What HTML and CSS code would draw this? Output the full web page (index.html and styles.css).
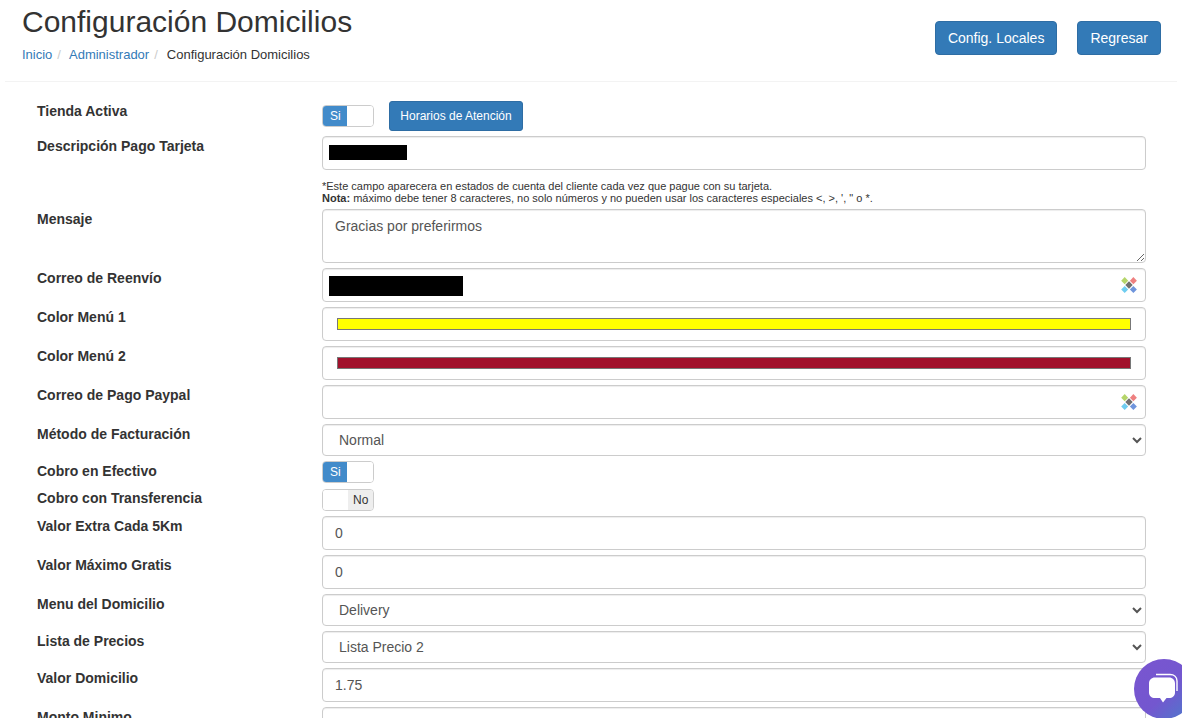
FILE: index.html
```html
<!DOCTYPE html>
<html lang="es">
<head>
<meta charset="utf-8">
<title>Configuración Domicilios</title>
<link rel="stylesheet" href="styles.css">
</head>
<body>
<header class="page-head">
  <div class="head-text">
    <h1 class="title">Configuración Domicilios</h1>
    <ol class="crumbs">
      <li><a href="#">Inicio</a></li>
      <li><a href="#">Administrador</a></li>
      <li class="current">Configuración Domicilios</li>
    </ol>
  </div>
  <div class="head-actions">
    <button class="btn" type="button">Config. Locales</button>
    <button class="btn" type="button">Regresar</button>
  </div>
</header>

<svg class="defs" width="0" height="0" aria-hidden="true">
  <symbol id="picker" viewBox="0 0 16 16">
    <path fill="#b5d56a" d="M3.700 0 7.200 3.700 3.700 7.200 .2 3.700Z"/>
    <path fill="#ee8080" d="M12.400 0 15.900 3.700 12.400 7.200 8.900 3.700Z"/>
    <path fill="#6fcdf0" d="M3.700 8.900 7.200 12.400 3.700 15.900 .2 12.400Z"/>
    <path fill="#6f95dc" d="M12.400 8.900 15.900 12.400 12.400 15.900 8.900 12.400Z"/>
    <path fill="#6f6f6f" d="M8 4.300 11.700 8 8 11.700 4.300 8Z"/>
  </symbol>
</svg>

<form class="form">
  <div class="row">
    <label class="lbl">Tienda Activa</label>
    <div class="ctl ctl-inline">
      <span class="toggle"><span class="on">Si</span><span class="blank"></span></span>
      <button class="btn btn-sm" type="button">Horarios de Atención</button>
    </div>
  </div>
  <div class="row">
    <label class="lbl">Descripción Pago Tarjeta</label>
    <div class="ctl">
      <div class="field"><input class="input" type="text"><span class="mask mask-desc"></span></div>
      <p class="note">*Este campo aparecera en estados de cuenta del cliente cada vez que pague con su tarjeta.<br><b>Nota:</b> máximo debe tener 8 caracteres, no solo números y no pueden usar los caracteres especiales &lt;, &gt;, ', " o *.</p>
    </div>
  </div>
  <div class="row">
    <label class="lbl">Mensaje</label>
    <div class="ctl"><textarea class="input area">Gracias por preferirmos</textarea></div>
  </div>
  <div class="row">
    <label class="lbl">Correo de Reenvío</label>
    <div class="ctl">
      <div class="field"><input class="input" type="text"><span class="mask mask-mail"></span><svg class="pick"><use href="#picker"/></svg></div>
    </div>
  </div>
  <div class="row">
    <label class="lbl">Color Menú 1</label>
    <div class="ctl"><input class="input" type="color" value="#ffff00"></div>
  </div>
  <div class="row">
    <label class="lbl">Color Menú 2</label>
    <div class="ctl"><input class="input" type="color" value="#a1112c"></div>
  </div>
  <div class="row">
    <label class="lbl">Correo de Pago Paypal</label>
    <div class="ctl">
      <div class="field"><input class="input" type="text"><svg class="pick"><use href="#picker"/></svg></div>
    </div>
  </div>
  <div class="row">
    <label class="lbl">Método de Facturación</label>
    <div class="ctl"><select class="input sel"><option>Normal</option></select></div>
  </div>
  <div class="row row-tall">
    <label class="lbl">Cobro en Efectivo</label>
    <div class="ctl"><span class="toggle"><span class="on">Si</span><span class="blank"></span></span></div>
  </div>
  <div class="row">
    <label class="lbl lbl-up">Cobro con Transferencia</label>
    <div class="ctl"><span class="toggle"><span class="blank"></span><span class="off">No</span></span></div>
  </div>
  <div class="row">
    <label class="lbl">Valor Extra Cada 5Km</label>
    <div class="ctl"><input class="input" type="text" value="0"></div>
  </div>
  <div class="row">
    <label class="lbl">Valor Máximo Gratis</label>
    <div class="ctl"><input class="input" type="text" value="0"></div>
  </div>
  <div class="row">
    <label class="lbl">Menu del Domicilio</label>
    <div class="ctl"><select class="input sel"><option>Delivery</option></select></div>
  </div>
  <div class="row">
    <label class="lbl">Lista de Precios</label>
    <div class="ctl"><select class="input sel"><option>Lista Precio 2</option></select></div>
  </div>
  <div class="row">
    <label class="lbl">Valor Domicilio</label>
    <div class="ctl"><input class="input" type="text" value="1.75"></div>
  </div>
  <div class="row">
    <label class="lbl">Monto Minimo</label>
    <div class="ctl"><input class="input" type="text"></div>
  </div>
</form>

<div class="chat">
  <svg viewBox="0 0 32 32" width="32" height="32" aria-hidden="true">
    <path fill="none" stroke="#fff" stroke-width="1.4" d="M8 1.500h14c4 0 7 2.500 7 6.500v10"/>
    <path fill="#fff" d="M7 4.500h14c3.500 0 6 2.500 6 6v9c0 3.500-2.500 5.500-6 5.500h-2.500L15 29.500 12 25H7c-3.500 0-6-2-6-5.500v-9c0-3.500 2.500-6 6-6Z"/>
  </svg>
</div>
</body>
</html>
```
FILE: styles.css
```css
* { box-sizing: border-box; }
html, body { margin: 0; height: 718px; overflow: hidden; }
body {
  font-family: "Liberation Sans", Arial, sans-serif;
  font-size: 14px;
  line-height: 20px;
  color: #333;
  background: #fff;
}
.defs { position: absolute; }

.page-head {
  display: flex;
  justify-content: space-between;
  margin: 0 5px;
  padding: 0 16px 0 17px;
  height: 82px;
  border-bottom: 1px solid #f3f3f3;
}
.title { margin: 4px 0 0; font-size: 30px; line-height: 36px; font-weight: 400; color: #333; }
.crumbs { display: flex; list-style: none; margin: 5px 0 0; padding: 0; font-size: 13px; line-height: 20px; }
.crumbs a { color: #337ab7; text-decoration: none; }
.crumbs li + li::before { content: "/"; color: #ccc; padding: 0 8px 0 5px; }
.crumbs .current { color: #333; }
.crumbs .current::before { padding-right: 9px; }

.head-actions { display: flex; gap: 20px; margin-top: 21px; align-items: flex-start; }
.btn {
  font: inherit;
  font-size: 14px;
  line-height: 20px;
  height: 34px;
  padding: 6px 12px;
  color: #fff;
  background: #337ab7;
  border: 1px solid #2e6da4;
  border-radius: 4px;
}
.btn-sm { width: 134px; font-size: 12px; line-height: 18px; height: 30px; padding: 5px 10px; border-radius: 3px; }

.form { padding: 19px 36px 0 37px; }
.row { display: flex; margin-bottom: 5px; }
.row-tall { margin-bottom: 6px; }
.lbl { flex: 0 0 285px; font-weight: 700; line-height: 20px; }
.lbl-up { margin-top: -1px; }
.ctl { flex: 1; min-width: 0; }
.ctl-inline { display: flex; align-items: flex-start; gap: 15px; }

.field { position: relative; }
.input {
  display: block;
  width: 100%;
  height: 34px;
  padding: 6px 12px;
  font: inherit;
  font-size: 14px;
  line-height: 20px;
  color: #555;
  background: #fff;
  border: 1px solid #ccc;
  border-radius: 4px;
  box-shadow: inset 0 1px 1px rgba(0,0,0,.075);
}
.area { height: 54px; resize: vertical; }
.sel { height: 32px; }
.mask { position: absolute; background: #000; }
.mask-desc { left: 7px; top: 9px; width: 78px; height: 15px; }
.mask-mail { left: 7px; top: 8px; width: 134px; height: 20px; }
.pick { position: absolute; right: 9px; top: 9px; width: 16px; height: 16px; }

.note { margin: 10px 0 0; font-size: 11px; line-height: 12px; }

.toggle {
  display: flex;
  width: 52px;
  height: 22px;
  overflow: hidden;
  font-size: 12px;
  line-height: 20px;
  border: 1px solid #ccc;
  border-radius: 4px;
}
.ctl-inline .toggle { margin-top: 4px; }
.toggle .on { width: 25px; margin: -1px 0 -1px -1px; padding-left: 8px; line-height: 22px; color: #fff; background: #428bca; }
.toggle .off { width: 25px; padding-left: 5px; color: #333; background: #eee; }
.toggle .blank { flex: 1; background: #fff; }

.chat {
  position: fixed;
  left: 1134px;
  top: 659px;
  width: 60px;
  height: 60px;
  display: flex;
  align-items: center;
  justify-content: center;
  border-radius: 50%;
  background: linear-gradient(135deg, #7a55d0 0%, #7357cf 55%, #4a7ccb 100%);
}
```
